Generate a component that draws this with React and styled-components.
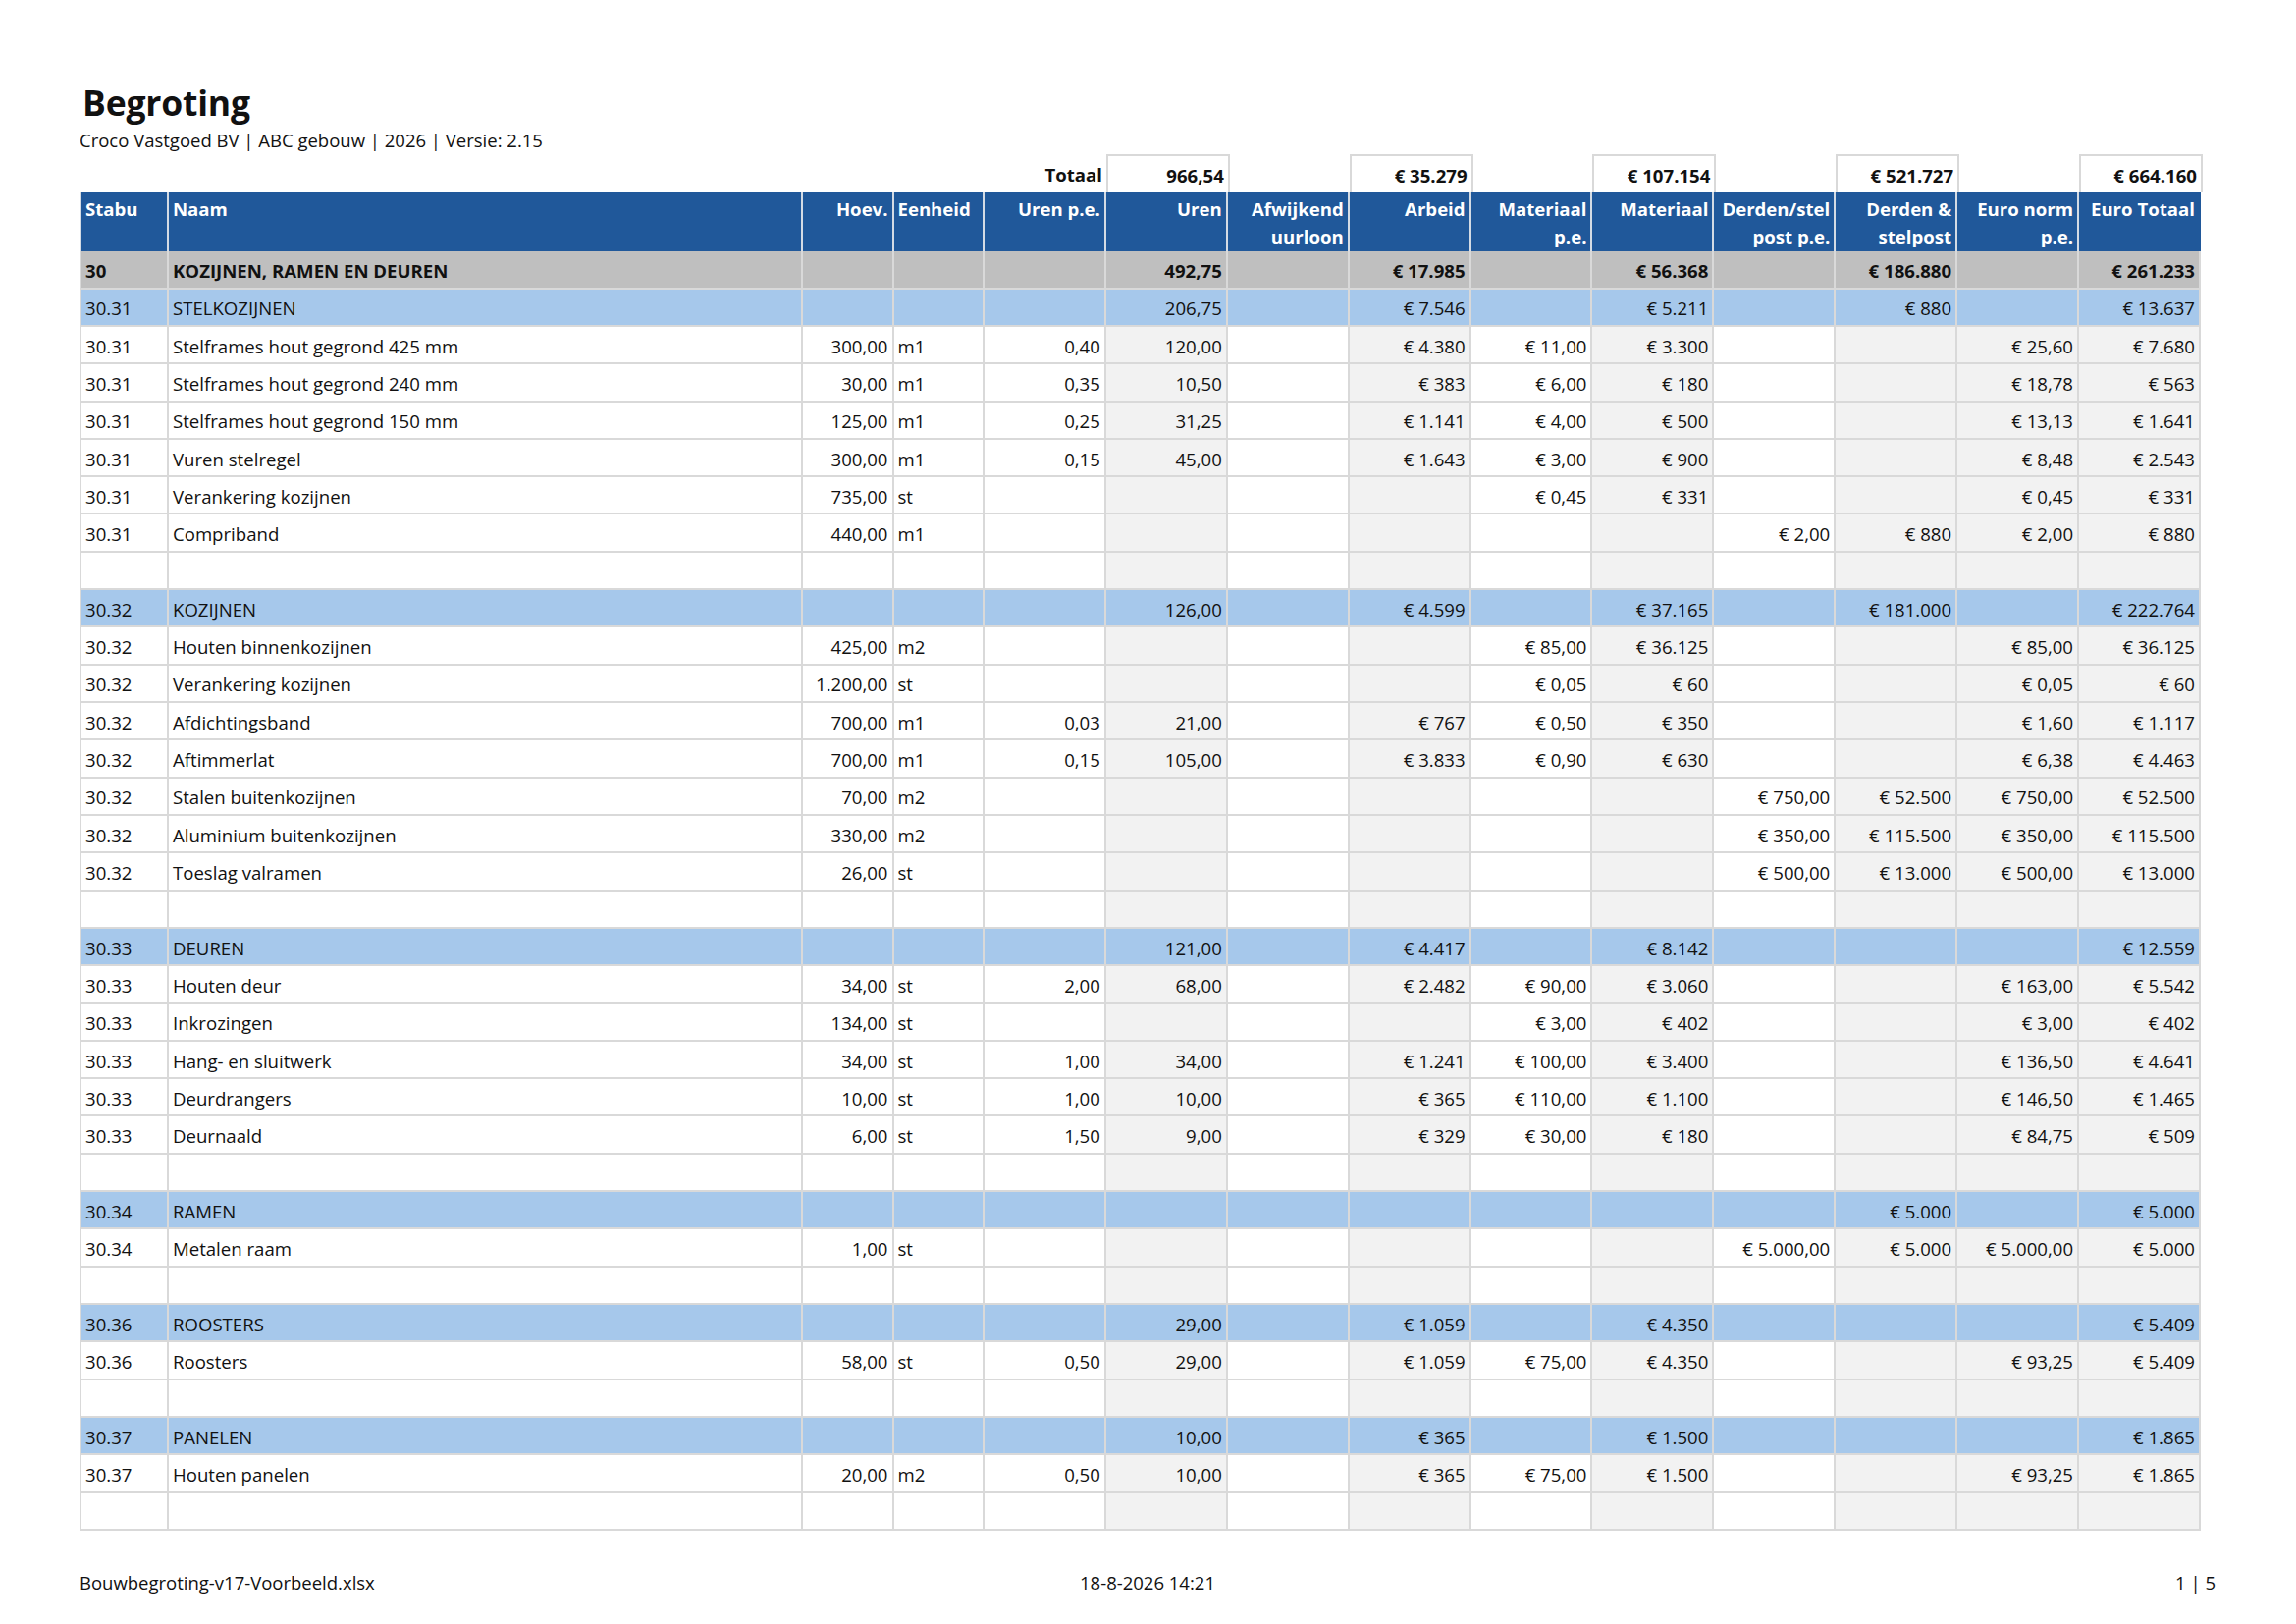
import React from "react";
import styled, { createGlobalStyle } from "styled-components";

const GlobalStyle = createGlobalStyle`
  body {
    margin: 0;
    background: #ffffff;
    font-family: "Open Sans", "Noto Sans", sans-serif;
    color: #111111;
  }
`;

const COLS = "91px 646px 92.5px 92.5px repeat(10, 123.9px)";
const GRAY_COLS = [5, 7, 9, 11, 12, 13];
const LEFT_COLS = [0, 1, 3];

const Page = styled.div`
  width: 2176px;
  padding: 83px 0 0 81px;
`;

const Title = styled.h1`
  margin: 0 0 0 3px;
  font-size: 35.5px;
  line-height: 1.2;
  font-weight: 700;
  letter-spacing: -0.2px;
`;

const Subtitle = styled.div`
  margin-top: 6px;
  font-size: 18.5px;
  line-height: 1.2;
`;

const Table = styled.div`
  margin-top: 3px;
  width: 2161px;
`;

const Row = styled.div`
  display: grid;
  grid-template-columns: ${COLS};
  height: ${(p) => p.$h || 38.32}px;
  background: ${(p) => p.$bg || "transparent"};
  font-weight: ${(p) => (p.$bold ? 700 : 400)};
`;

const Cell = styled.div`
  box-sizing: border-box;
  display: flex;
  align-items: center;
  justify-content: ${(p) => (p.$left ? "flex-start" : "flex-end")};
  padding: 2px 4px 0 4px;
  font-size: 18.6px;
  white-space: nowrap;
  background: ${(p) => p.$bg || "transparent"};
  border-right: 2px solid #d9d9d9;
  border-bottom: 2px solid #d9d9d9;
  &:first-child {
    border-left: 2px solid #d9d9d9;
  }
`;

const TotalCell = styled.div`
  box-sizing: border-box;
  display: flex;
  align-items: center;
  justify-content: flex-end;
  padding: 2px 4px 0 4px;
  font-size: 18.6px;
  font-weight: 700;
  ${(p) =>
    p.$boxed &&
    `
    border: 2px solid #d9d9d9;
    border-bottom: none;
    margin-right: -2px;
  `}
`;

const HeadCell = styled.div`
  box-sizing: border-box;
  display: flex;
  flex-direction: column;
  align-items: ${(p) => (p.$left ? "flex-start" : "flex-end")};
  text-align: ${(p) => (p.$left ? "left" : "right")};
  padding: 3px 4px 0 4px;
  font-size: 18.6px;
  line-height: 28px;
  font-weight: 700;
  color: #ffffff;
  background: #20589a;
  border-right: 2px solid #d4dbe4;
  &:first-child {
    border-left: 2px solid #d4dbe4;
  }
  &:last-child {
    border-right-color: #20589a;
  }
`;

const Footer = styled.div`
  display: grid;
  grid-template-columns: 1fr auto 1fr;
  width: 2176px;
  margin-top: 40px;
  font-size: 18.5px;
  & > :last-child {
    text-align: right;
  }
`;

const header = [
  ["Stabu"],
  ["Naam"],
  ["Hoev."],
  ["Eenheid"],
  ["Uren p.e."],
  ["Uren"],
  ["Afwijkend", "uurloon"],
  ["Arbeid"],
  ["Materiaal", "p.e."],
  ["Materiaal"],
  ["Derden/stel", "post p.e."],
  ["Derden &", "stelpost"],
  ["Euro norm", "p.e."],
  ["Euro Totaal"],
];

const totals = {
  5: "966,54",
  7: "€ 35.279",
  9: "€ 107.154",
  11: "€ 521.727",
  13: "€ 664.160",
};

// type: g = hoofdgroep, s = subgroep, i = regel, e = leeg
const sum = (code, name, uren, arbeid, mat, derden, totaal) => ({
  type: "s",
  v: [code, name, "", "", "", uren, "", arbeid, "", mat, "", derden, "", totaal],
});
const item = (code, name, hv, eh, upe, uren, arbeid, mpe, mat, dpe, derden, norm, totaal) => ({
  type: "i",
  v: [code, name, hv, eh, upe, uren, "", arbeid, mpe, mat, dpe, derden, norm, totaal],
});
const empty = { type: "e", v: Array(14).fill("") };

const rows = [
  {
    type: "g",
    v: ["30", "KOZIJNEN, RAMEN EN DEUREN", "", "", "", "492,75", "", "€ 17.985", "", "€ 56.368", "", "€ 186.880", "", "€ 261.233"],
  },
  sum("30.31", "STELKOZIJNEN", "206,75", "€ 7.546", "€ 5.211", "€ 880", "€ 13.637"),
  item("30.31", "Stelframes hout gegrond 425 mm", "300,00", "m1", "0,40", "120,00", "€ 4.380", "€ 11,00", "€ 3.300", "", "", "€ 25,60", "€ 7.680"),
  item("30.31", "Stelframes hout gegrond 240 mm", "30,00", "m1", "0,35", "10,50", "€ 383", "€ 6,00", "€ 180", "", "", "€ 18,78", "€ 563"),
  item("30.31", "Stelframes hout gegrond 150 mm", "125,00", "m1", "0,25", "31,25", "€ 1.141", "€ 4,00", "€ 500", "", "", "€ 13,13", "€ 1.641"),
  item("30.31", "Vuren stelregel", "300,00", "m1", "0,15", "45,00", "€ 1.643", "€ 3,00", "€ 900", "", "", "€ 8,48", "€ 2.543"),
  item("30.31", "Verankering kozijnen", "735,00", "st", "", "", "", "€ 0,45", "€ 331", "", "", "€ 0,45", "€ 331"),
  item("30.31", "Compriband", "440,00", "m1", "", "", "", "", "", "€ 2,00", "€ 880", "€ 2,00", "€ 880"),
  empty,
  sum("30.32", "KOZIJNEN", "126,00", "€ 4.599", "€ 37.165", "€ 181.000", "€ 222.764"),
  item("30.32", "Houten binnenkozijnen", "425,00", "m2", "", "", "", "€ 85,00", "€ 36.125", "", "", "€ 85,00", "€ 36.125"),
  item("30.32", "Verankering kozijnen", "1.200,00", "st", "", "", "", "€ 0,05", "€ 60", "", "", "€ 0,05", "€ 60"),
  item("30.32", "Afdichtingsband", "700,00", "m1", "0,03", "21,00", "€ 767", "€ 0,50", "€ 350", "", "", "€ 1,60", "€ 1.117"),
  item("30.32", "Aftimmerlat", "700,00", "m1", "0,15", "105,00", "€ 3.833", "€ 0,90", "€ 630", "", "", "€ 6,38", "€ 4.463"),
  item("30.32", "Stalen buitenkozijnen", "70,00", "m2", "", "", "", "", "", "€ 750,00", "€ 52.500", "€ 750,00", "€ 52.500"),
  item("30.32", "Aluminium buitenkozijnen", "330,00", "m2", "", "", "", "", "", "€ 350,00", "€ 115.500", "€ 350,00", "€ 115.500"),
  item("30.32", "Toeslag valramen", "26,00", "st", "", "", "", "", "", "€ 500,00", "€ 13.000", "€ 500,00", "€ 13.000"),
  empty,
  sum("30.33", "DEUREN", "121,00", "€ 4.417", "€ 8.142", "", "€ 12.559"),
  item("30.33", "Houten deur", "34,00", "st", "2,00", "68,00", "€ 2.482", "€ 90,00", "€ 3.060", "", "", "€ 163,00", "€ 5.542"),
  item("30.33", "Inkrozingen", "134,00", "st", "", "", "", "€ 3,00", "€ 402", "", "", "€ 3,00", "€ 402"),
  item("30.33", "Hang- en sluitwerk", "34,00", "st", "1,00", "34,00", "€ 1.241", "€ 100,00", "€ 3.400", "", "", "€ 136,50", "€ 4.641"),
  item("30.33", "Deurdrangers", "10,00", "st", "1,00", "10,00", "€ 365", "€ 110,00", "€ 1.100", "", "", "€ 146,50", "€ 1.465"),
  item("30.33", "Deurnaald", "6,00", "st", "1,50", "9,00", "€ 329", "€ 30,00", "€ 180", "", "", "€ 84,75", "€ 509"),
  empty,
  sum("30.34", "RAMEN", "", "", "", "€ 5.000", "€ 5.000"),
  item("30.34", "Metalen raam", "1,00", "st", "", "", "", "", "", "€ 5.000,00", "€ 5.000", "€ 5.000,00", "€ 5.000"),
  empty,
  sum("30.36", "ROOSTERS", "29,00", "€ 1.059", "€ 4.350", "", "€ 5.409"),
  item("30.36", "Roosters", "58,00", "st", "0,50", "29,00", "€ 1.059", "€ 75,00", "€ 4.350", "", "", "€ 93,25", "€ 5.409"),
  empty,
  sum("30.37", "PANELEN", "10,00", "€ 365", "€ 1.500", "", "€ 1.865"),
  item("30.37", "Houten panelen", "20,00", "m2", "0,50", "10,00", "€ 365", "€ 75,00", "€ 1.500", "", "", "€ 93,25", "€ 1.865"),
  empty,
];

const rowBg = { g: "#bfbfbf", s: "#a6c8eb" };

const DataRow = ({ row }) => (
  <Row $bg={rowBg[row.type]} $bold={row.type === "g"}>
    {row.v.map((val, i) => (
      <Cell
        key={i}
        $left={LEFT_COLS.includes(i)}
        $bg={!rowBg[row.type] && GRAY_COLS.includes(i) ? "#f2f2f2" : undefined}
      >
        {val}
      </Cell>
    ))}
  </Row>
);

const App = () => (
  <>
    <GlobalStyle />
    <Page>
      <Title>Begroting</Title>
      <Subtitle>Croco Vastgoed BV | ABC gebouw | 2026 | Versie: 2.15</Subtitle>
      <Table>
        <Row $h={39.5}>
          {header.map((_, i) =>
            i === 4 ? (
              <TotalCell key={i}>Totaal</TotalCell>
            ) : (
              <TotalCell key={i} $boxed={!!totals[i]}>
                {totals[i] || ""}
              </TotalCell>
            )
          )}
        </Row>
        <Row $h={60}>
          {header.map((lines, i) => (
            <HeadCell key={i} $left={LEFT_COLS.includes(i)}>
              {lines.map((l) => (
                <span key={l}>{l}</span>
              ))}
            </HeadCell>
          ))}
        </Row>
        {rows.map((r, i) => (
          <DataRow key={i} row={r} />
        ))}
      </Table>
      <Footer>
        <span>Bouwbegroting-v17-Voorbeeld.xlsx</span>
        <span>18-8-2026 14:21</span>
        <span>1 | 5</span>
      </Footer>
    </Page>
  </>
);

export default App;
